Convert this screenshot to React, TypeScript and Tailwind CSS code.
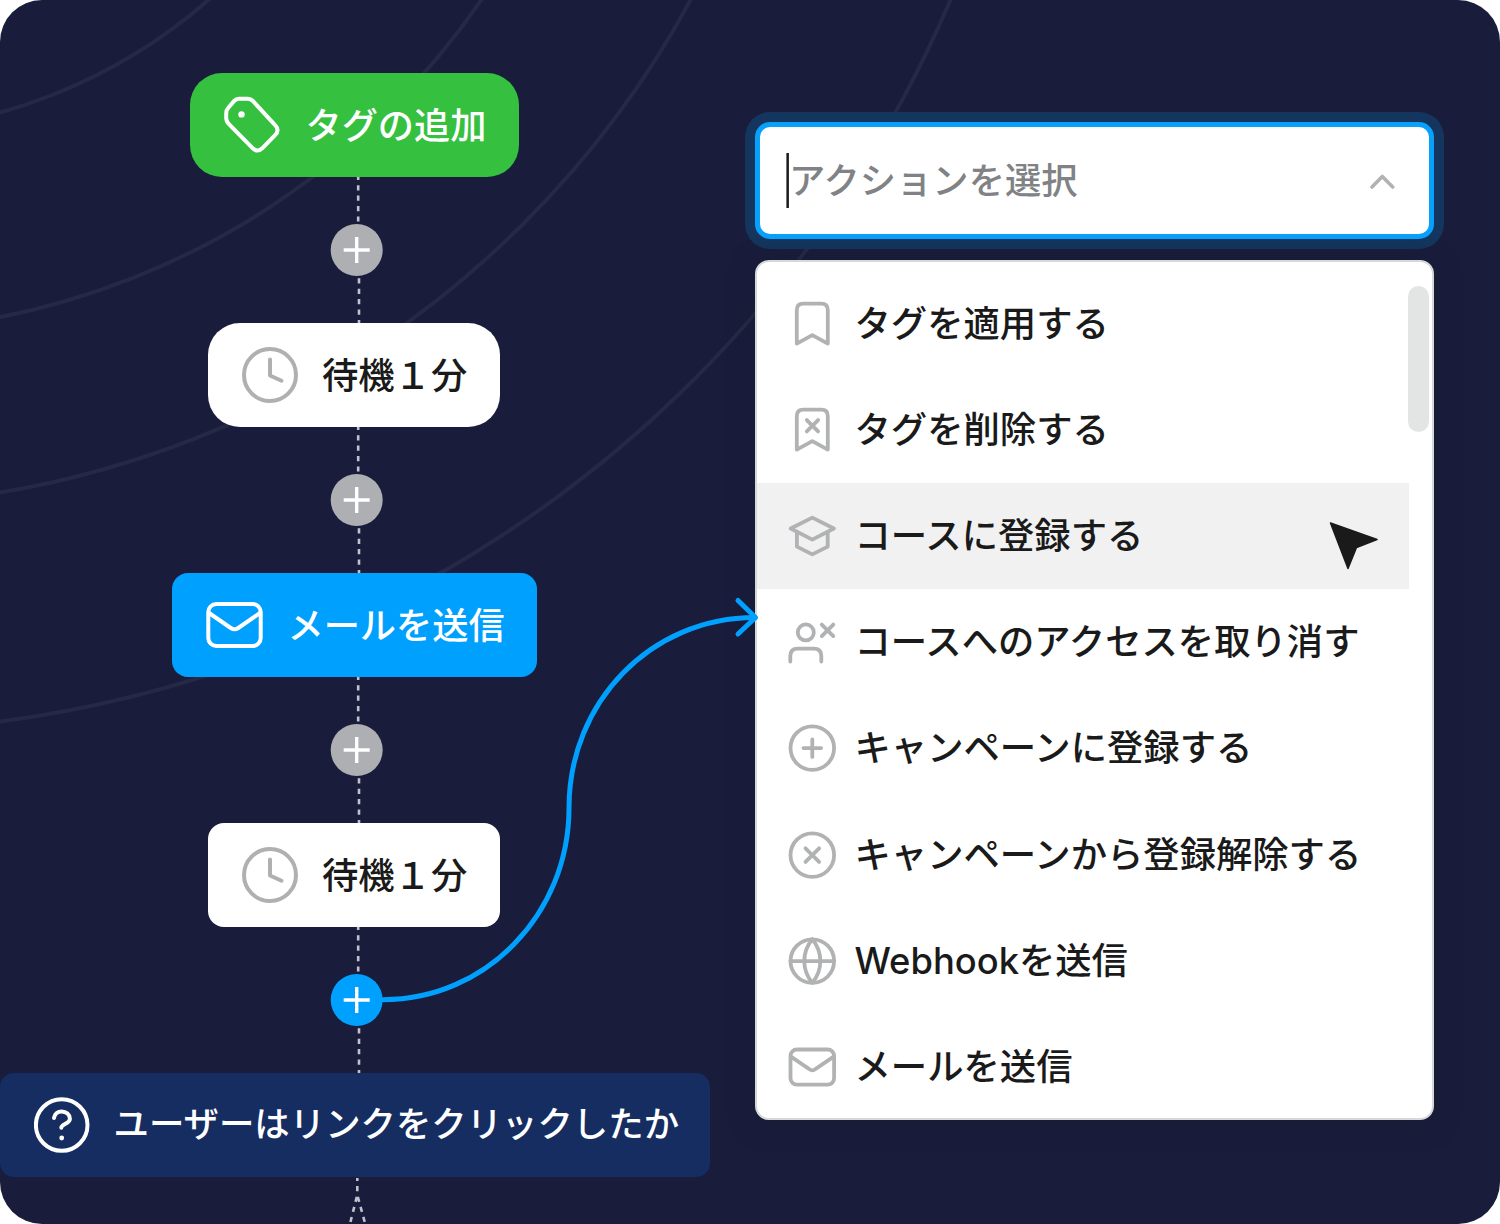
import { ReactNode } from 'react';
import clsx from 'clsx';

interface StepProps {
  icon: ReactNode;
  label: string;
  className: string;
  labelClassName?: string;
}

interface Action {
  label: string;
  icon: ReactNode;
  active?: boolean;
}

function TagIcon() {
  return (
    <svg width="57" height="58" viewBox="0.5 0.3 57 58" fill="none" stroke="currentColor" strokeWidth="4">
      <path d="M24.5 3H15.5Q12.6 3 10.7 5.2L5 11.8Q2.7 14.4 2.7 17.5V22Q2.7 25.6 5.2 28.1L29.3 52.6Q34 57 38.7 52.6L51.6 39.5Q56.6 34.5 51.6 29.5L29.3 5.2Q27.3 3 24.5 3Z" />
      <circle cx="18" cy="18.7" r="3.2" fill="currentColor" stroke="none" />
    </svg>
  );
}

function ClockIcon() {
  return (
    <svg width="56" height="56" viewBox="0 0 56 56" fill="none" stroke="#afb0b1" strokeWidth="4" strokeLinecap="round" strokeLinejoin="round">
      <circle cx="28" cy="28" r="26" />
      <path d="M28 12.5V28.5L39.5 33.7" />
    </svg>
  );
}

function EnvelopeIcon() {
  return (
    <svg width="57" height="46" viewBox="0 0 57 46" fill="none" stroke="currentColor" strokeWidth="4">
      <rect x="2.3" y="2" width="52.4" height="42" rx="8" />
      <path d="M2.3 10.5L24.8 26Q28.5 28.5 32.2 26L54.7 10.5" />
    </svg>
  );
}

function QuestionIcon() {
  return (
    <svg width="56" height="56" viewBox="0.3 0 56 56" fill="none" stroke="currentColor" strokeWidth="4" strokeLinecap="round">
      <circle cx="28" cy="28" r="25.8" />
      <path d="M20.3 21C20.8 17 23.8 14.4 28 14.4C32.6 14.4 36.2 17.6 36.2 21.8C36.2 26.8 27.6 27.2 27.6 30.8" />
      <circle cx="28" cy="41" r="2.4" fill="currentColor" stroke="none" />
    </svg>
  );
}

function ActionIcon({ children }: { children: ReactNode }) {
  return (
    <svg
      className="shrink-0"
      width="48"
      height="48"
      viewBox="-0.3 -0.1 48 48"
      fill="none"
      stroke="#b1b2b3"
      strokeWidth="3.8"
      strokeLinecap="round"
      strokeLinejoin="round"
    >
      {children}
    </svg>
  );
}

const BOOKMARK = 'M8.5 43.5V10Q8.5 3.5 15 3.5H33Q39.5 3.5 39.5 10V43.5L24 35Z';

const actions: Action[] = [
  { label: 'タグを適用する', icon: <path d={BOOKMARK} /> },
  { label: 'タグを削除する', icon: <path d={`${BOOKMARK}M18.5 14L29.8 25.3M29.8 14L18.5 25.3`} /> },
  {
    label: 'コースに登録する',
    icon: <path d="M24 5.5L45.6 16.4L24 27.5L2.4 16.4ZM8.6 20V34.5L24 42.3L39.4 34.5V20" />,
    active: true,
  },
  {
    label: 'コースへのアクセスを取り消す',
    icon: (
      <>
        <circle cx="17.5" cy="14.3" r="8" />
        <path d="M2 43.5V38Q2 30.5 9.5 30.5H25.5Q33 30.5 33 38V43.5M33.5 6.5L45 18M45 6.5L33.5 18" />
      </>
    ),
  },
  {
    label: 'キャンペーンに登録する',
    icon: (
      <>
        <circle cx="24" cy="24" r="21.8" />
        <path d="M24 15.2V32.8M15.2 24H32.8" />
      </>
    ),
  },
  {
    label: 'キャンペーンから登録解除する',
    icon: (
      <>
        <circle cx="24" cy="24" r="21.8" />
        <path d="M17.2 17.2L30.8 30.8M30.8 17.2L17.2 30.8" />
      </>
    ),
  },
  {
    label: 'Webhookを送信',
    icon: (
      <>
        <circle cx="24" cy="24" r="21.8" />
        <path d="M24 2.2C13.3 15 13.3 33 24 45.8C34.7 33 34.7 15 24 2.2M2.2 24H45.8" />
      </>
    ),
  },
  {
    label: 'メールを送信',
    icon: (
      <>
        <rect x="2.2" y="6.4" width="43.6" height="35.2" rx="6.5" />
        <path d="M3 13.8L21 26Q24 28.5 27 26L45 13.8" />
      </>
    ),
  },
];

function Step({ icon, label, className, labelClassName }: StepProps) {
  return (
    <div className={clsx('flex h-[104px] shrink-0 items-center', className)}>
      {icon}
      <span className={clsx('whitespace-nowrap leading-[52px] font-medium', labelClassName)}>{label}</span>
    </div>
  );
}

function Connector({ active = false }: { active?: boolean }) {
  return (
    <svg className="ml-[330px] shrink-0" width="53" height="146" viewBox="0 0 53 146">
      <g stroke="#c0c2cd" strokeWidth="2.6" strokeDasharray="5.2 5.2">
        <path d="M28.2 0V47" strokeDashoffset="2.2" />
        <path d="M29 101.3V146" />
      </g>
      <circle cx="26.7" cy="73" r="26" fill={active ? '#00a0ff' : '#adafb2'} />
      <path d="M26.7 60V86M13.7 73H39.7" stroke="#fff" strokeWidth="3.4" />
    </svg>
  );
}

function Rings() {
  return (
    <svg className="absolute inset-0" width="1500" height="1224" fill="none" stroke="#262945" strokeWidth="4">
      <circle cx="-145" cy="-405" r="537.5" />
      <circle cx="-147.2" cy="-429.8" r="761.2" />
      <circle cx="-157.7" cy="-458.8" r="964.2" />
      <circle cx="-156.4" cy="-471.4" r="1203" />
    </svg>
  );
}

function ActionSelect() {
  return (
    <div className="flex h-[117px] items-center rounded-[15px] border-[5px] border-[#07a0fb] bg-white pr-[34px] pl-[26px] shadow-[0_0_0_10px_#14355d]">
      <svg width="3" height="55" viewBox="0 0 3 55">
        <rect x="0.4" width="2.5" height="55" fill="#1a1a1a" />
      </svg>
      <span className="mt-px text-[36.3px] leading-[52px] font-medium text-[#808285]">アクションを選択</span>
      <svg className="ml-auto" width="26" height="18" viewBox="-0.5 -0.5 26 18" fill="none" stroke="#b1b2b3" strokeWidth="3.6" strokeLinecap="round" strokeLinejoin="round">
        <path d="M2.5 14.5L12.8 4L23.2 14.5" />
      </svg>
    </div>
  );
}

function ActionMenu() {
  return (
    <div className="relative mt-[21px] h-[860px] rounded-[14px] border-2 border-[#d6d8dc] bg-white pt-[8.5px] shadow-[0_4px_24px_rgba(20,32,48,0.5)]">
      {actions.map((action) => (
        <div
          key={action.label}
          className={clsx('flex h-[106.2px] w-[652px] items-center pl-[31px]', action.active && 'bg-[#f1f1f1]')}
        >
          <ActionIcon>{action.icon}</ActionIcon>
          <span className="ml-[18.5px] whitespace-nowrap text-[36.35px] leading-[52px] font-medium text-[#1a1a1a]">
            {action.label}
          </span>
        </div>
      ))}
      <div className="absolute top-[24px] right-[3px] h-[146px] w-[21px] rounded-full bg-[#e3e4e4]" />
      <svg className="absolute top-[259px] left-[571px]" width="50" height="50" viewBox="0 0 50 50">
        <path
          d="M2.5 2L49 18.5L28.5 26.5L20 47.5Z"
          fill="#1a1a1a"
          stroke="#1a1a1a"
          strokeWidth="1.5"
          strokeLinejoin="round"
        />
      </svg>
    </div>
  );
}

export default function App() {
  return (
    <div className="h-[1224px] w-[1500px] bg-white">
      <div className="relative flex h-full w-full overflow-hidden rounded-[42px] bg-[#191c3b] font-[Inter,'Noto_Sans_CJK_JP',sans-serif]">
        <Rings />

        <div className="relative flex w-[710px] flex-col items-start pt-[73px]">
          <Step
            icon={<TagIcon />}
            label="タグの追加"
            className="ml-[190px] w-[329.4px] rounded-[32px] bg-[#35c03f] pl-[34px] text-white"
            labelClassName="ml-[24.5px] mt-[2px] text-[36.2px]"
          />
          <Connector />
          <Step
            icon={<ClockIcon />}
            label="待機１分"
            className="ml-[207.5px] w-[292px] rounded-[32px] bg-white pl-[34.5px] text-[#1a1a1a]"
            labelClassName="ml-[24px] mt-[2px] text-[36.3px]"
          />
          <Connector />
          <Step
            icon={<EnvelopeIcon />}
            label="メールを送信"
            className="ml-[172px] w-[365px] rounded-[16px] bg-[#00a0ff] pl-[34px] text-white"
            labelClassName="ml-[24.5px] mt-[2px] text-[36.2px]"
          />
          <Connector />
          <Step
            icon={<ClockIcon />}
            label="待機１分"
            className="ml-[207.5px] w-[292px] rounded-[16px] bg-white pl-[34.5px] text-[#1a1a1a]"
            labelClassName="ml-[24px] mt-[2px] text-[36.3px]"
          />
          <Connector active />
          <Step
            icon={<QuestionIcon />}
            label="ユーザーはリンクをクリックしたか"
            className="w-[710px] rounded-[14px] bg-[#152d61] pl-[33.5px] text-white"
            labelClassName="ml-[24px] text-[35.4px]"
          />
          <svg className="ml-[340px] shrink-0" width="36" height="47" viewBox="0 0 36 47" fill="none" stroke="#c0c2cd" strokeWidth="2.6">
            <path d="M17.3 1V4M17.3 9V14.3" />
            <path d="M16.8 19.8L10.2 46M17.8 19.8L25 46" strokeDasharray="5.2 5.2" />
          </svg>
        </div>

        <div className="relative ml-[45px] w-[679px] pt-[122px]">
          <ActionSelect />
          <ActionMenu />
        </div>

        {/* curve from the active step to the menu */}
        <svg className="absolute inset-0" width="1500" height="1224" fill="none" stroke="#00a0ff" strokeWidth="5" strokeLinecap="round" strokeLinejoin="round">
          <path d="M383 999.7C486 999.7 569 914 569 808C569 702 651 617.5 755 617.5" />
          <path d="M738 600.5L755.5 617.5L738 634" />
        </svg>
      </div>
    </div>
  );
}
